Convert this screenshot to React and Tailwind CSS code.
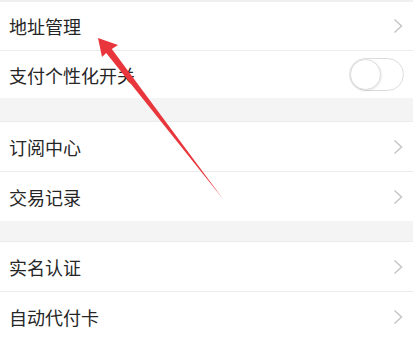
const font = { fontFamily: '"Noto Sans CJK SC", "Noto Sans", sans-serif' }

function Chevron() {
  return (
    <svg width="10" height="16" viewBox="0 0 10 16" className="shrink-0">
      <path d="M1.5 1.5 L8.5 8 L1.5 14.5" fill="none" stroke="#c6c6c6" strokeWidth="1.5" />
    </svg>
  )
}

function Toggle() {
  return (
    <div className="relative w-[55px] h-[33px] rounded-full border border-[#dcdcdc] bg-white">
      <div className="absolute left-0 top-0 w-[31px] h-[31px] rounded-full border border-[#dedede] bg-white shadow-[1px_1px_2px_rgba(0,0,0,0.08)]" />
    </div>
  )
}

function Row({ label, h, right }) {
  return (
    <div className={`flex items-center justify-between bg-white pl-[9px] pr-[10px] ${h}`}>
      <span className="text-[18px] text-[#262626] leading-none">{label}</span>
      {right === 'toggle' ? <div className="mr-[-1px]"><Toggle /></div> : <Chevron />}
    </div>
  )
}

function Line() {
  return <div className="h-px bg-[#ececec]" />
}

function Gap({ h }) {
  return <div className={`bg-[#f4f4f4] border-b border-[#ebebeb] ${h}`} />
}

export default function App() {
  return (
    <div className="relative w-[413px] h-[341px] overflow-hidden bg-white" style={font}>
      <div className="h-[2px] bg-[#f0f0f0]" />
      <Row label="地址管理" h="h-[48px]" />
      <Line />
      <Row label="支付个性化开关" h="h-[47px]" right="toggle" />
      <Gap h="h-[24px]" />
      <Row label="订阅中心" h="h-[49px]" />
      <Line />
      <Row label="交易记录" h="h-[49px]" />
      <Gap h="h-[21px]" />
      <Row label="实名认证" h="h-[49px]" />
      <Line />
      <Row label="自动代付卡" h="h-[49px]" />

      {/* red annotation arrow */}
      <svg className="absolute left-0 top-0 pointer-events-none" width="413" height="341">
        <polygon
          points="98,38 118,45 111.8,48.9 223,199 106.2,53.1 102,57"
          fill="#e8363c"
        />
      </svg>
    </div>
  )
}
